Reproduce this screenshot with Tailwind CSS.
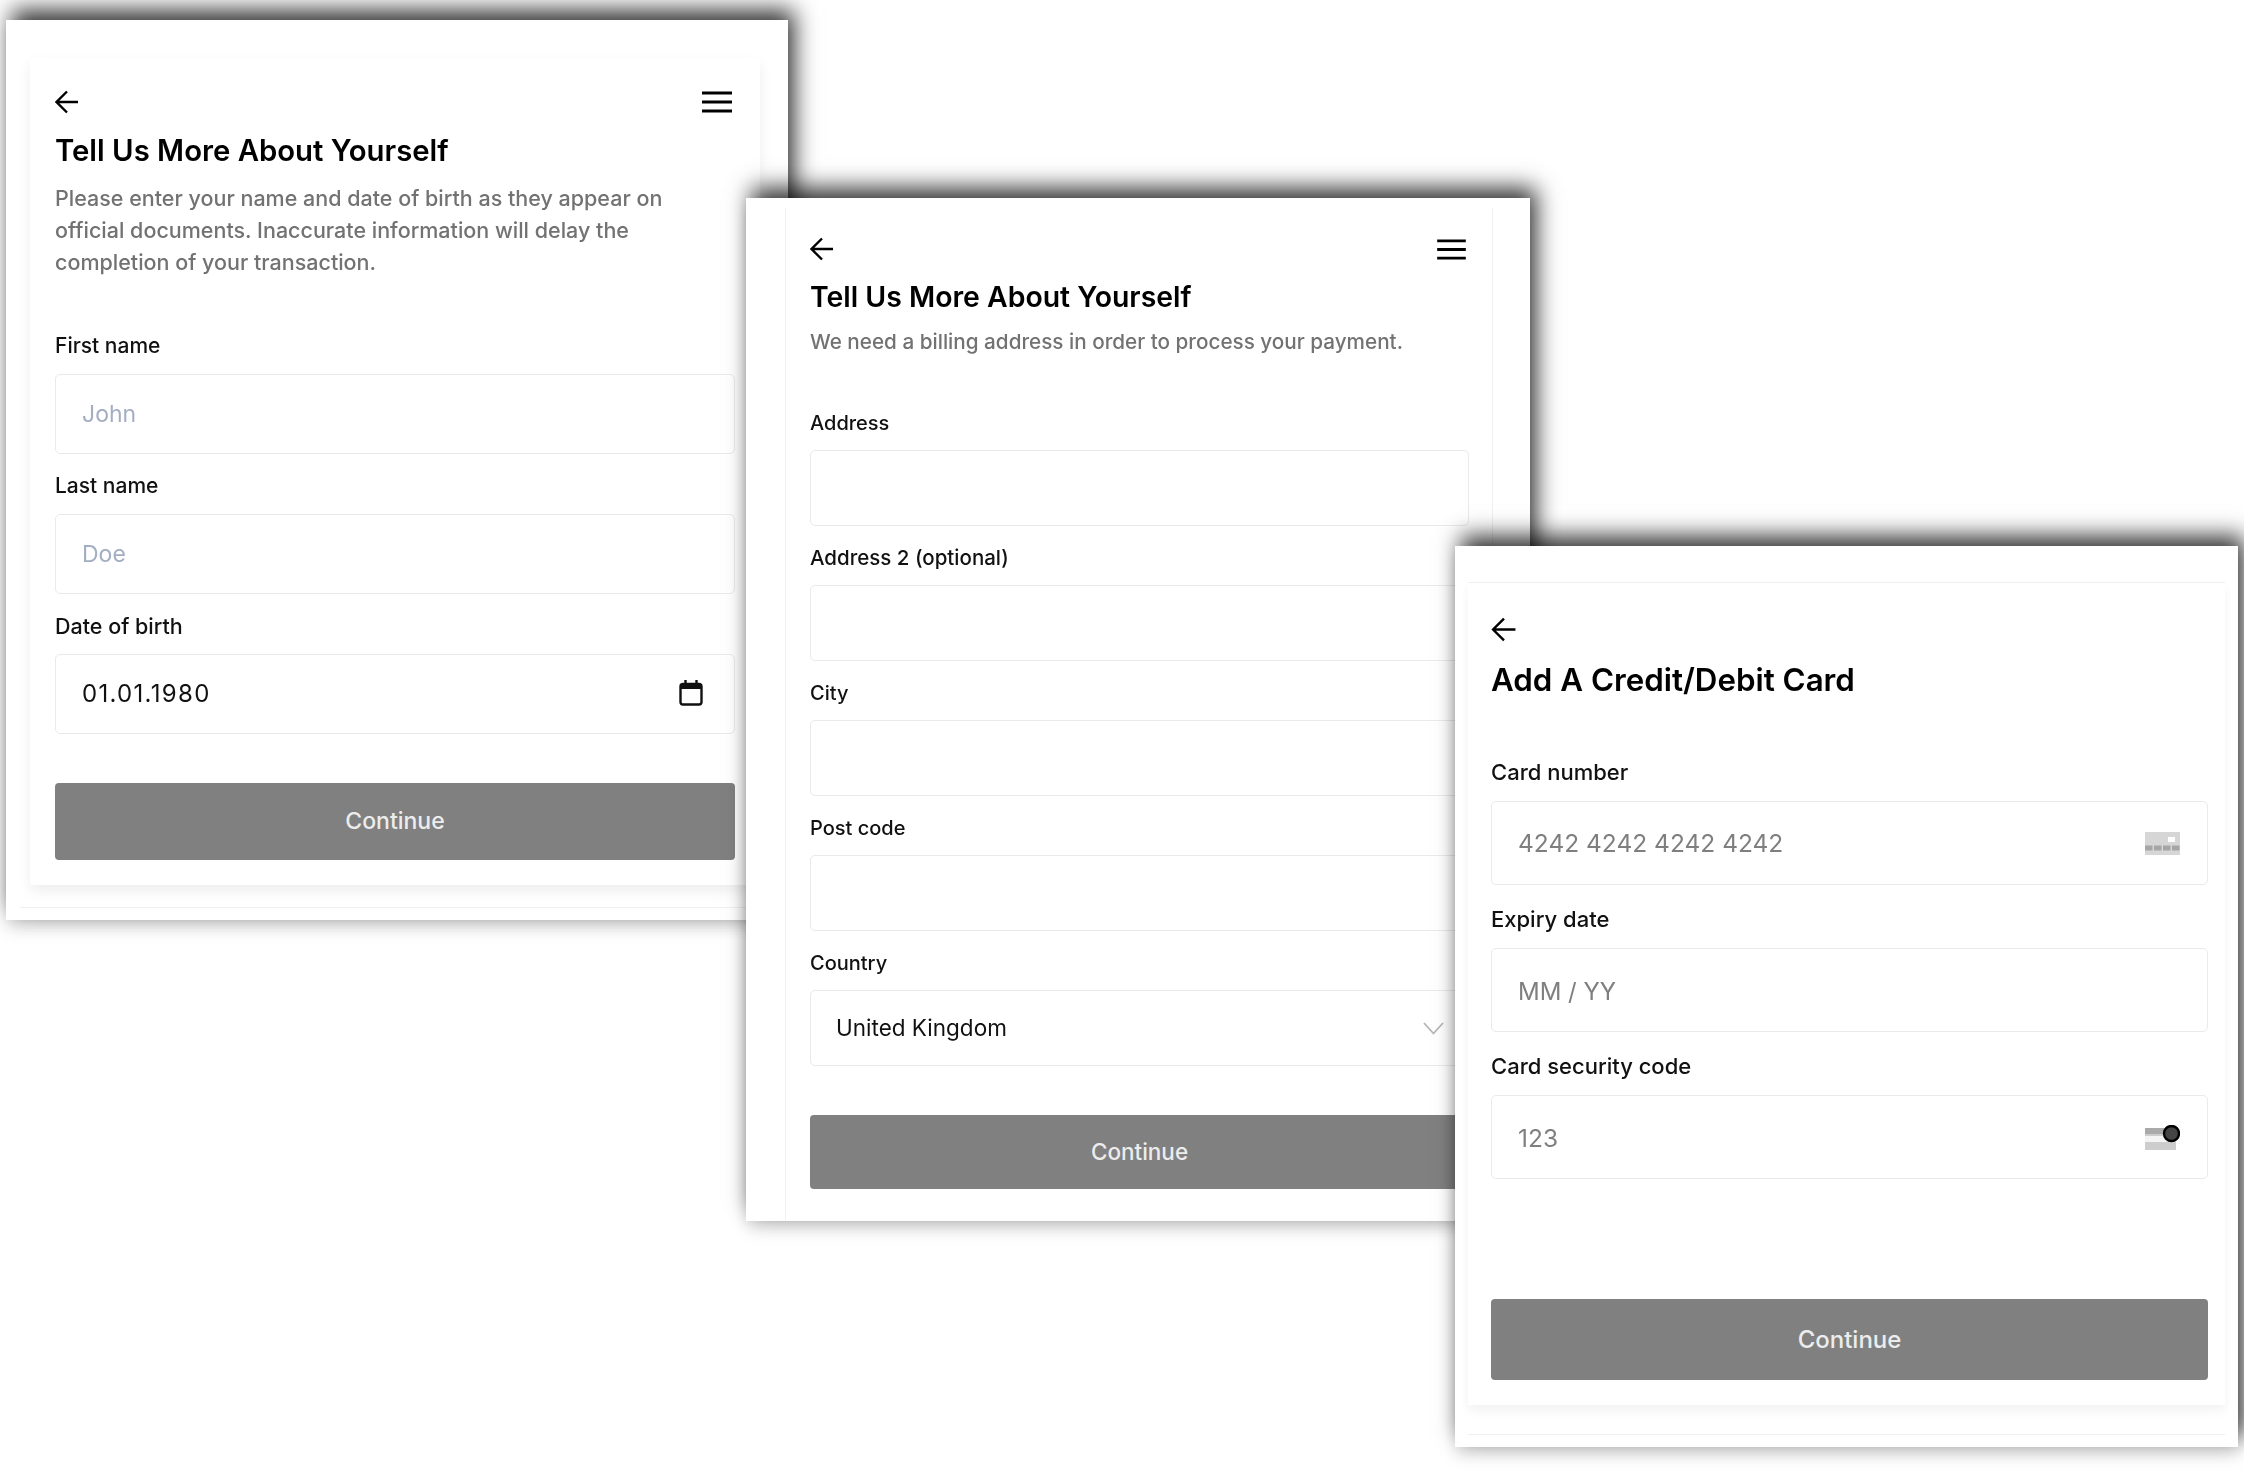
<!DOCTYPE html>
<html lang="en">
<head>
    <meta charset="UTF-8">
    <title>Checkout forms</title>
    <script src="https://cdn.jsdelivr.net/npm/@tailwindcss/browser@4"></script>
</head>
<body class="bg-white overflow-hidden">
    <div class="relative w-[2244px] h-[1474px] overflow-hidden blur-[0.6px] font-['Inter','Liberation_Sans',sans-serif] text-[#111]">

        <!-- Screen 1: name -->
        <section class="absolute left-[6px] top-[20px] w-[782px] h-[900px] bg-white shadow-[6px_-10px_22px_rgba(0,0,0,0.8),0_10px_15px_rgba(0,0,0,0.1)]">
            <div class="ml-[24px] mt-[38px] w-[730px] h-[827px] px-[25px] pt-[32px] rounded-[4px] bg-white shadow-[0_6px_14px_rgba(0,0,0,0.07)]">
                <div class="flex justify-between items-center h-[24px]">
                    <svg class="w-[24px] h-[24px]" viewBox="0 0 24 24" fill="none" stroke="#000" stroke-width="2.4"><path d="M23 12H2M12 1.5 1.5 12 12 22.5"/></svg>
                    <svg class="w-[30px] h-[22px] mr-[3px]" viewBox="0 0 30 22" fill="none" stroke="#000" stroke-width="3"><path d="M0 2h30M0 11h30M0 20h30"/></svg>
                </div>
                <h1 class="mt-[19px] text-[29.3px] leading-[36px] font-semibold text-black">Tell Us More About Yourself</h1>
                <p class="mt-[13px] text-[21.5px] leading-[32px] font-medium text-[#727272]">Please enter your name and date of birth as they appear on<br>official documents. Inaccurate information will delay the<br>completion of your transaction.</p>
                <label class="block mt-[56px] text-[21px] leading-[24px] font-medium">First name</label>
                <div class="mt-[16px] h-[80px] pl-[26px] flex items-center rounded-[5px] border border-[#e8eaee] text-[23px] text-[#a4aec2]">John</div>
                <label class="block mt-[20px] text-[21px] leading-[24px] font-medium">Last name</label>
                <div class="mt-[16px] h-[80px] pl-[26px] flex items-center rounded-[5px] border border-[#e8eaee] text-[23px] text-[#a4aec2]">Doe</div>
                <label class="block mt-[20px] text-[21.5px] leading-[24px] font-medium">Date of birth</label>
                <div class="mt-[16px] h-[80px] pl-[26px] pr-[31px] flex items-center justify-between rounded-[5px] border border-[#e8eaee] text-[24px] tracking-[1.3px]">
                    <span>01.01.1980</span>
                    <svg class="w-[24px] h-[26px] mb-[3px]" viewBox="0 0 24 26" fill="none"><rect x="1.5" y="4" width="21" height="20.5" rx="2.5" stroke="#111" stroke-width="2.4"/><path d="M1.5 5h21v4h-21z" fill="#111"/><path d="M6.5 0v5M17.5 0v5" stroke="#111" stroke-width="2.4"/></svg>
                </div>
                <button class="mt-[49px] w-full h-[77px] rounded-[4px] bg-[#808080] text-[23px] font-medium text-[#ececec]">Continue</button>
            </div>
            <div class="ml-[14px] mt-[22px] h-px bg-[#f0f0f0]"></div>
        </section>

        <!-- Screen 2: billing address -->
        <section class="absolute left-[746px] top-[198px] w-[784px] h-[1023px] bg-white shadow-[6px_-10px_22px_rgba(0,0,0,0.8),0_10px_15px_rgba(0,0,0,0.1)]">
            <div class="ml-[39px] w-[708px] h-[1012px] relative top-[10px] px-[24px] pt-[29px] border-x border-[#f0f0f0]">
                <div class="flex justify-between items-center h-[24px]">
                    <svg class="w-[24px] h-[24px]" viewBox="0 0 24 24" fill="none" stroke="#000" stroke-width="2.4"><path d="M23 12H2M12 1.5 1.5 12 12 22.5"/></svg>
                    <svg class="w-[29px] h-[21px] mr-[2px]" viewBox="0 0 30 22" fill="none" stroke="#000" stroke-width="3"><path d="M0 2h30M0 11h30M0 20h30"/></svg>
                </div>
                <h1 class="mt-[18px] text-[28.4px] leading-[36px] font-semibold text-black">Tell Us More About Yourself</h1>
                <p class="mt-[11px] text-[20.7px] leading-[32px] font-medium text-[#727272]">We need a billing address in order to process your payment.</p>
                <label class="block mt-[53px] text-[20px] leading-[24px] font-medium">Address</label>
                <div class="mt-[15px] h-[76px] w-[659px] rounded-[5px] border border-[#e8eaee]"></div>
                <label class="block mt-[20px] text-[20.5px] leading-[24px] font-medium">Address 2 (optional)</label>
                <div class="mt-[15px] h-[76px] w-[659px] rounded-[5px] border border-[#e8eaee]"></div>
                <label class="block mt-[20px] text-[20px] leading-[24px] font-medium">City</label>
                <div class="mt-[15px] h-[76px] w-[659px] rounded-[5px] border border-[#e8eaee]"></div>
                <label class="block mt-[20px] text-[20px] leading-[24px] font-medium">Post code</label>
                <div class="mt-[15px] h-[76px] w-[659px] rounded-[5px] border border-[#e8eaee]"></div>
                <label class="block mt-[20px] text-[20px] leading-[24px] font-medium">Country</label>
                <div class="mt-[15px] h-[76px] w-[659px] pl-[25px] pr-[24px] flex items-center justify-between rounded-[5px] border border-[#e8eaee] text-[22.5px]">
                    <span>United Kingdom</span>
                    <svg class="w-[21px] h-[13px]" viewBox="0 0 21 13" fill="none" stroke="#b5b5b5" stroke-width="1.8"><path d="M1 1l9.5 10.5L20 1"/></svg>
                </div>
                <button class="mt-[49px] w-[659px] h-[74px] rounded-[4px] bg-[#808080] text-[22.5px] font-medium text-[#ececec]">Continue</button>
            </div>
        </section>

        <!-- Screen 3: card details -->
        <section class="absolute left-[1455px] top-[546px] w-[783px] h-[901px] bg-white shadow-[6px_-10px_22px_rgba(0,0,0,0.8),0_10px_15px_rgba(0,0,0,0.1)]">
            <div class="mx-[13px] mt-[36px] h-[823px] pl-[23px] pr-[17px] pt-[34px] border-t border-[#efefef] bg-white shadow-[0_6px_10px_rgba(0,0,0,0.05)]">
                <svg class="w-[26px] h-[25px]" viewBox="0 0 24 24" fill="none" stroke="#000" stroke-width="2.3"><path d="M23 12H2M12 1.5 1.5 12 12 22.5"/></svg>
                <h1 class="mt-[20px] text-[31.3px] leading-[36px] font-semibold text-black">Add A Credit/Debit Card</h1>
                <label class="block mt-[62px] text-[22px] leading-[24px] font-medium">Card number</label>
                <div class="mt-[17px] h-[84px] pl-[26px] pr-[27px] flex items-center justify-between rounded-[5px] border border-[#e8eaee] text-[24.5px] text-[#7f7f7f]">
                    <span>4242 4242 4242 4242</span>
                    <svg class="w-[35px] h-[23px]" viewBox="0 0 35 23"><rect width="35" height="23" fill="#d6d6d6"/><rect x="23" y="5" width="7" height="5" fill="#fff"/><path d="M0 16h35" stroke="#a6a6a6" stroke-width="5" stroke-dasharray="7.5 1.5"/></svg>
                </div>
                <label class="block mt-[22px] text-[22px] leading-[24px] font-medium">Expiry date</label>
                <div class="mt-[17px] h-[84px] pl-[26px] pt-[3px] flex items-center rounded-[5px] border border-[#e8eaee] text-[24px] text-[#7f7f7f]">MM / YY</div>
                <label class="block mt-[22px] text-[22px] leading-[24px] font-medium">Card security code</label>
                <div class="mt-[17px] h-[84px] pl-[26px] pr-[27px] flex items-center justify-between rounded-[5px] border border-[#e8eaee] text-[24.5px] text-[#7f7f7f]">
                    <span class="pt-[2px]">123</span>
                    <svg class="w-[35px] h-[25px]" viewBox="0 0 35 25"><rect y="3" width="31" height="22" fill="#cdcdcd"/><rect y="3" width="31" height="6" fill="#aaa"/><rect y="11" width="31" height="6" fill="#f4f4f4"/><circle cx="26.5" cy="8.5" r="7.5" fill="#444" stroke="#000" stroke-width="2.4"/></svg>
                </div>
                <button class="mt-[120px] w-full h-[81px] rounded-[4px] bg-[#808080] text-[24px] font-medium text-[#ececec]">Continue</button>
            </div>
            <div class="mx-[13px] mt-[29px] h-px bg-[#efefef]"></div>
        </section>
    </div>
</body>
</html>
